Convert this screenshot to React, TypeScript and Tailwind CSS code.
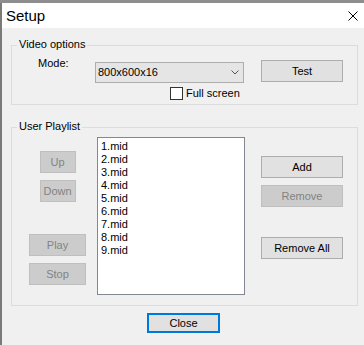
import React from 'react';

const files = ['1.mid', '2.mid', '3.mid', '4.mid', '5.mid', '6.mid', '7.mid', '8.mid', '9.mid'];

function Btn({
  label,
  disabled,
  className = '',
}: {
  label: string;
  disabled?: boolean;
  className?: string;
}) {
  const look = disabled
    ? 'bg-[#cccccc] border-[#bfbfbf] text-[#838383]'
    : 'bg-[#e1e1e1] border-[#adadad] text-black';
  return (
    <button
      disabled={disabled}
      className={`flex h-[22px] items-center justify-center border text-[11px] leading-[13px] ${look} ${className}`}
    >
      {label}
    </button>
  );
}

function GroupBox({
  title,
  className = '',
  children,
}: {
  title: string;
  className?: string;
  children: React.ReactNode;
}) {
  return (
    <div className={`relative w-[347px] border border-[#dcdcdc] ${className}`}>
      <span className="absolute left-[5px] top-[-8px] bg-[#f0f0f0] px-[2px] text-[11px] leading-[13px] text-black">
        {title}
      </span>
      {children}
    </div>
  );
}

export default function App() {
  return (
    <div
      className="h-[345px] w-[364px] overflow-hidden bg-[#8e8e8e] pt-[3px]"
      style={{ fontFamily: '"Liberation Sans", Arial, sans-serif' }}
    >
      <div className="flex h-[342px] flex-col border-l-2 border-[#7a7a7a] bg-[#f0f0f0]">
        {/* title bar */}
        <div className="flex h-[25px] items-center justify-between bg-white pl-[4px] pr-[6px]">
          <span className="text-[15px] leading-[18px] text-black">Setup</span>
          <svg width="10" height="10" viewBox="0 0 10 10">
            <path d="M0.5 0.5 L9.5 9.5 M9.5 0.5 L0.5 9.5" stroke="#000" strokeWidth="1" fill="none" />
          </svg>
        </div>

        <div className="flex flex-col pl-[9px]">
          <GroupBox title="Video options" className="mt-[17px] pb-[4px] pt-[11px]">
            <div className="flex items-start">
              <span className="ml-[26px] w-[57px] text-[11px] leading-[13px] text-black">Mode:</span>
              <div className="mt-[5px] flex h-[21px] w-[149px] items-center justify-between border border-[#adadad] bg-[#e5e5e5] pl-[2px] pr-[4px]">
                <span className="text-[11px] leading-[13px] text-black">800x600x16</span>
                <svg width="8" height="5" viewBox="0 0 8 5">
                  <path d="M0.5 0.5 L4 4 L7.5 0.5" stroke="#555" strokeWidth="1" fill="none" />
                </svg>
              </div>
              <Btn label="Test" className="ml-[17px] mt-[3px] h-[21px] w-[82px]" />
            </div>
            <div className="mt-[4px] flex items-center gap-[3px] pl-[158px]">
              <div className="h-[13px] w-[13px] border border-[#333333] bg-white" />
              <span className="text-[11px] leading-[13px] text-black">Full screen</span>
            </div>
          </GroupBox>

          <GroupBox title="User Playlist" className="mt-[22px]">
            <div className="flex items-start pb-[10px] pt-[9px]">
              <div className="ml-[17px] flex w-[57px] flex-col items-center pt-[14px]">
                <Btn label="Up" disabled className="w-[36px]" />
                <Btn label="Down" disabled className="mt-[7px] w-[36px]" />
                <Btn label="Play" disabled className="mt-[32px] w-[57px]" />
                <Btn label="Stop" disabled className="mt-[7px] w-[57px]" />
              </div>
              <div className="ml-[11px] h-[158px] w-[148px] border border-[#828790] bg-white pl-[3px] pt-[2px]">
                {files.map((f) => (
                  <div key={f} className="text-[11px] leading-[13px] text-black">
                    {f}
                  </div>
                ))}
              </div>
              <div className="ml-[16px] flex w-[82px] flex-col pt-[19px]">
                <Btn label="Add" className="w-[82px]" />
                <Btn label="Remove" disabled className="mt-[7px] w-[82px]" />
                <Btn label="Remove All" className="mt-[30px] w-[82px]" />
              </div>
            </div>
          </GroupBox>

          <button className="ml-[136px] mt-[7px] flex h-[20px] w-[73px] items-center justify-center border-2 border-[#0078d7] bg-[#e1e1e1] text-[11px] leading-[13px] text-black">
            Close
          </button>
        </div>
      </div>
    </div>
  );
}
